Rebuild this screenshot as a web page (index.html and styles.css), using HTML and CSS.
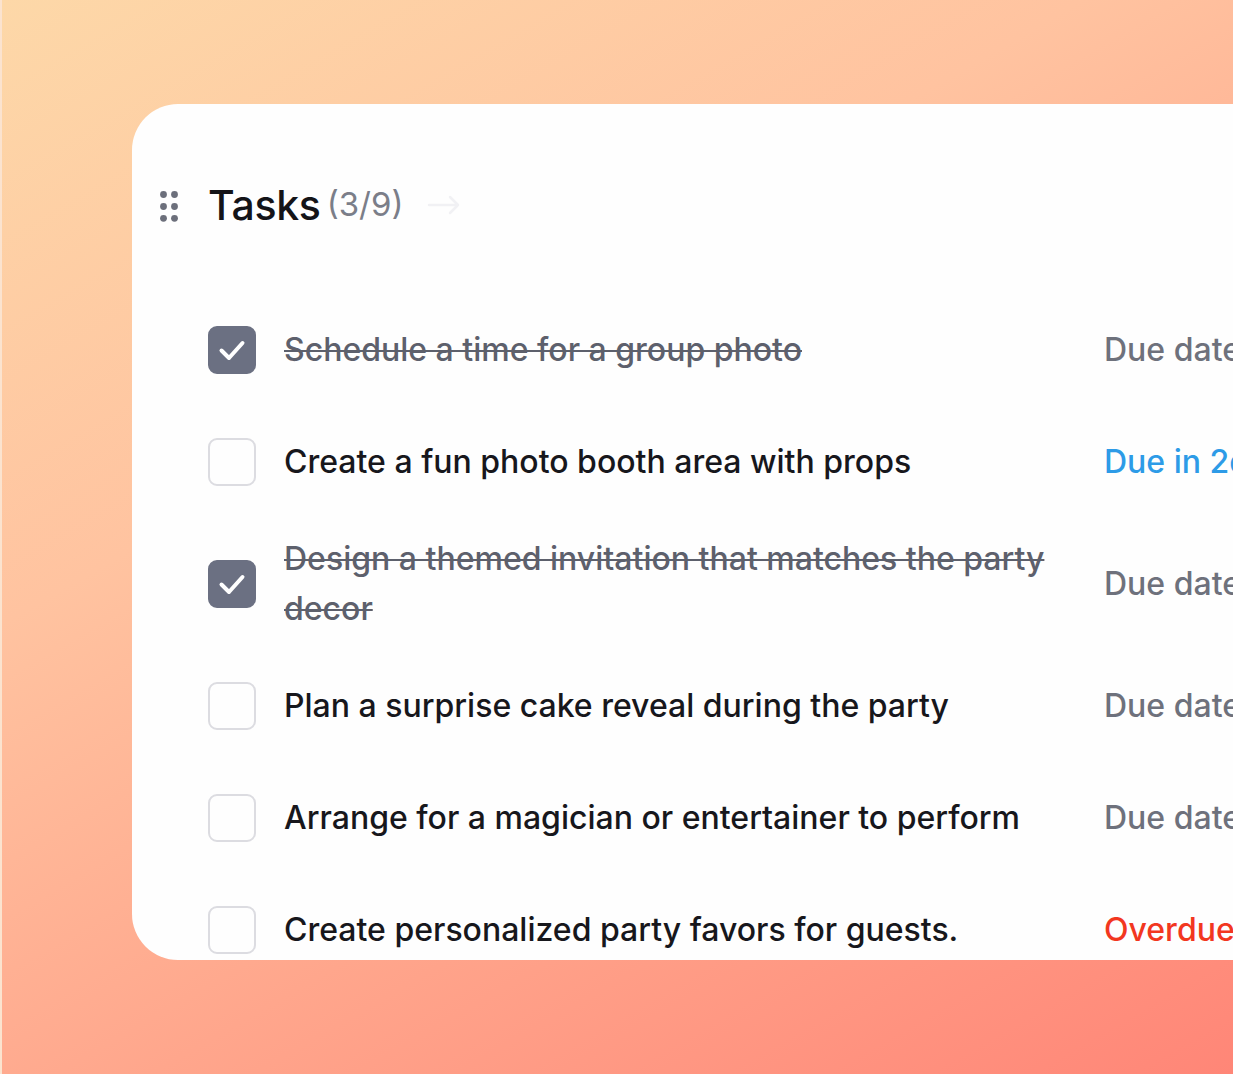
FILE: index.html
```html
<!DOCTYPE html>
<html lang="en">
<head>
<meta charset="utf-8">
<title>Tasks</title>
<link rel="stylesheet" href="styles.css">
</head>
<body>
<div class="page">
  <section class="card">
    <header class="card-header">
      <svg class="drag" width="18" height="31" viewBox="0 0 18 31" aria-hidden="true">
        <circle cx="3.5" cy="3.5" r="3.4"/><circle cx="14.5" cy="3.5" r="3.4"/>
        <circle cx="3.5" cy="15.5" r="3.4"/><circle cx="14.5" cy="15.5" r="3.4"/>
        <circle cx="3.5" cy="27.3" r="3.4"/><circle cx="14.5" cy="27.3" r="3.4"/>
      </svg>
      <h1 class="title">Tasks</h1>
      <span class="count">(3/9)</span>
      <svg class="arrow" width="34" height="20" viewBox="0 0 34 20" aria-hidden="true">
        <path d="M2 10H31M23 2l8 8-8 8"/>
      </svg>
    </header>
    <ul class="tasks">
      <li class="task done">
        <span class="box checked"><svg viewBox="0 0 48 48" width="48" height="48"><path d="M13.5 24.5l7.5 7.5 13.5-15"/></svg></span>
        <span class="name">Schedule a time for a group photo</span>
        <span class="due">Due date</span>
      </li>
      <li class="task">
        <span class="box"></span>
        <span class="name">Create a fun photo booth area with props</span>
        <span class="due soon">Due in 2d</span>
      </li>
      <li class="task done">
        <span class="box checked"><svg viewBox="0 0 48 48" width="48" height="48"><path d="M13.5 24.5l7.5 7.5 13.5-15"/></svg></span>
        <span class="name">Design a themed invitation that matches the party decor</span>
        <span class="due">Due date</span>
      </li>
      <li class="task">
        <span class="box"></span>
        <span class="name">Plan a surprise cake reveal during the party</span>
        <span class="due">Due date</span>
      </li>
      <li class="task">
        <span class="box"></span>
        <span class="name">Arrange for a magician or entertainer to perform</span>
        <span class="due">Due date</span>
      </li>
      <li class="task">
        <span class="box"></span>
        <span class="name">Create personalized party favors for guests.</span>
        <span class="due overdue">Overdue</span>
      </li>
    </ul>
  </section>
</div>
</body>
</html>
```

FILE: styles.css
```css
html, body {
  margin: 0;
  padding: 0;
  height: 100%;
  overflow: hidden;
}

body {
  font-family: Inter, "Noto Sans", "Liberation Sans", sans-serif;
  background: linear-gradient(150deg, #fdd8a8 0%, #ffc3a0 35%, #ffa68c 65%, #ff8677 100%);
  border-left: 2px solid #fbe3cf;
  box-sizing: border-box;
}

.page {
  padding: 104px 0 0 130px;
}

.card {
  width: 1200px;
  height: 856px;
  background: #fefefe;
  border-radius: 46px 0 0 46px;
  overflow: hidden;
  padding: 0 0 0 28px;
  box-sizing: border-box;
}

.card-header {
  display: flex;
  align-items: center;
  height: 60px;
  padding-top: 71px;
}

.drag {
  fill: #6c6f7b;
  flex: none;
  margin-top: 2px;
}

.title {
  margin: 0 0 0 30px;
  font-size: 41px;
  font-weight: 500;
  color: #141418;
  letter-spacing: -0.3px;
}

.count {
  margin-left: 6px;
  font-size: 33px;
  font-weight: 400;
  color: #7b7e89;
  margin-top: -2px;
}

.arrow {
  margin-left: 24px;
  fill: none;
  stroke: #f1f1f4;
  stroke-width: 2.5;
  stroke-linecap: round;
  stroke-linejoin: round;
}

.tasks {
  list-style: none;
  margin: 59px 0 0 48px;
  padding: 0;
}

.task {
  display: grid;
  grid-template-columns: 48px 792px auto;
  column-gap: 28px;
  align-items: center;
  min-height: 80px;
  padding: 16px 0;
  font-size: 32px;
  font-weight: 500;
  line-height: 50px;
  color: #17171c;
}

.box {
  width: 48px;
  height: 48px;
  box-sizing: border-box;
  border: 2px solid #dcdce1;
  border-radius: 9px;
  display: flex;
}

.box.checked {
  background: #6b7082;
  border-color: #6b7082;
}

.box svg {
  margin: -2px;
  fill: none;
  stroke: #ffffff;
  stroke-width: 4;
  stroke-linecap: round;
  stroke-linejoin: round;
}

.done .name {
  color: #5d606c;
  text-decoration: line-through;
  text-decoration-thickness: 2px;
}

.due {
  color: #6e717c;
  white-space: nowrap;
}

.due.soon { color: #2d9be7; }
.due.overdue { color: #f2371f; }
```
